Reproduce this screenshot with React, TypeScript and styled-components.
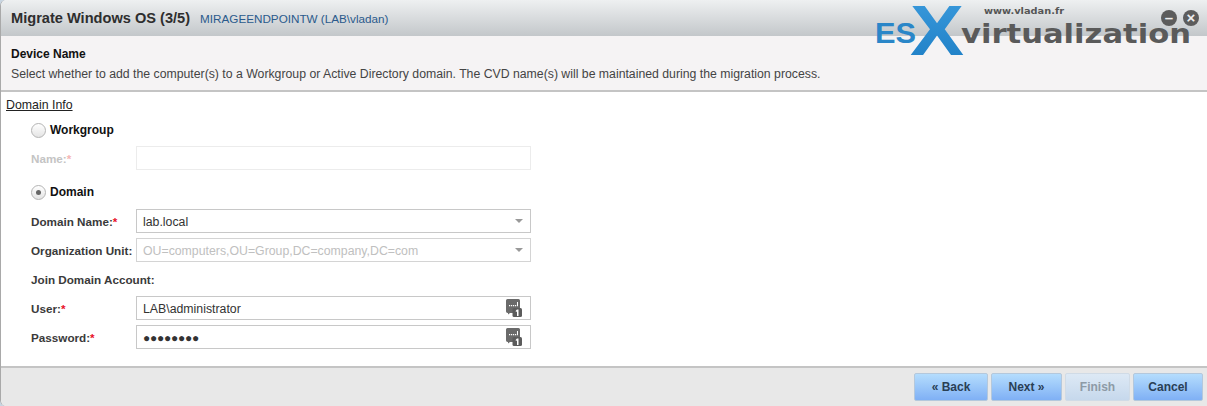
import React from "react";
import styled, {createGlobalStyle} from "styled-components";

const Global = createGlobalStyle`
  html, body {
    margin: 0;
    padding: 0;
    background: #c9d6e2;
  }
  body {
    font-family: "Liberation Sans", Arial, sans-serif;
    font-size: 12px;
    color: #333;
  }
`;

const Dialog = styled.div`
  position: relative;
  width: 1207px;
  height: 406px;
  box-sizing: border-box;
  border-left: 1px solid #a9a9a9;
  border-radius: 6px 0 0 6px;
  background: #fff;
  display: flex;
  flex-direction: column;
  overflow: hidden;
`;

const TitleBar = styled.div`
  height: 36px;
  box-sizing: border-box;
  padding-left: 10px;
  display: flex;
  align-items: center;
  gap: 10px;
  background: linear-gradient(#eef0f1, #c3c7ca);
`;

const Title = styled.div`
  font-size: 14.6px;
  font-weight: bold;
  color: #2e2e2e;
`;

const SubTitle = styled.div`
  font-size: 11.7px;
  color: #2a5a8c;
`;

const Intro = styled.div`
  height: 56px;
  box-sizing: border-box;
  padding: 11px 0 0 10px;
  background: #f5f3f4;
  border-bottom: 2px solid #c4c4c4;
`;

const IntroTitle = styled.div`
  font-size: 12px;
  font-weight: bold;
  color: #111;
  line-height: 15px;
`;

const IntroText = styled.div`
  margin-top: 5px;
  font-size: 12.28px;
  color: #444;
  line-height: 15px;
`;

const Content = styled.div`
  flex: 1;
  padding: 6px 0 0 5px;
`;

const SectionLink = styled.div`
  font-size: 12.35px;
  line-height: 14px;
  color: #222;
  text-decoration: underline;
`;

const Form = styled.div`
  padding: 10px 0 0 25px;
  display: flex;
  flex-direction: column;
`;

const RadioRow = styled.div<{ $top: number }>`
  margin-top: ${p => p.$top}px;
  height: 16px;
  display: flex;
  align-items: center;
  gap: 4px;
  font-size: 12px;
  font-weight: bold;
  color: #111;
`;

const Radio = styled.span<{ $checked?: boolean }>`
  width: 13px;
  height: 13px;
  border-radius: 50%;
  border: 1px solid #b4b4b4;
  background: linear-gradient(#fff, #e4e4e4);
  display: flex;
  align-items: center;
  justify-content: center;

  &::after {
    content: "";
    display: ${p => (p.$checked ? "block" : "none")};
    width: 5px;
    height: 5px;
    border-radius: 50%;
    background: #666;
  }
`;

const Row = styled.div<{ $top: number }>`
  margin-top: ${p => p.$top}px;
  display: flex;
  align-items: center;
  height: 24px;
`;

const Label = styled.div<{ $disabled?: boolean }>`
  width: 105px;
  flex: none;
  font-size: 11.7px;
  font-weight: bold;
  color: ${p => (p.$disabled ? "#c4c4c4" : "#3a3a3a")};
`;

const Star = styled.span<{ $disabled?: boolean }>`
  color: ${p => (p.$disabled ? "#f5b5b5" : "#e8102a")};
`;

const Field = styled.div<{ $state?: "faint" | "soft" }>`
  width: 395px;
  height: 24px;
  box-sizing: border-box;
  display: flex;
  align-items: center;
  justify-content: space-between;
  padding: 0 7px 0 6px;
  background: #fff;
  border: 1px solid ${p => (p.$state === "faint" ? "#ececec" : p.$state === "soft" ? "#d4d4d4" : "#c8c8c8")};
  font-size: 12.3px;
  color: ${p => (p.$state === "soft" ? "#c0c0c0" : "#333")};
`;

const FieldText = styled.span`
  padding-top: 2px;
`;

const Arrow = styled.span`
  width: 0;
  height: 0;
  border-left: 4px solid transparent;
  border-right: 4px solid transparent;
  border-top: 4px solid #999;
`;

const Dots = styled.span`
  padding-top: 2px;
  font-size: 12px;
  letter-spacing: -0.25px;
  color: #333;
`;

const Heading = styled.div`
  margin-top: 11px;
  height: 14px;
  line-height: 14px;
  font-size: 11.7px;
  font-weight: bold;
  color: #3a3a3a;
`;

const Footer = styled.div`
  height: 40px;
  box-sizing: border-box;
  border-top: 2px solid #c4c4c4;
  background: #e8e8e8;
  display: flex;
  justify-content: flex-end;
  gap: 3px;
  padding: 5px 4px 0 0;
`;

const Btn = styled.div<{ $w: number; $off?: boolean }>`
  width: ${p => p.$w}px;
  height: 28px;
  box-sizing: border-box;
  border: 1px solid ${p => (p.$off ? "#d0dbe6" : "#b4c8dc")};
  border-radius: 2px;
  display: flex;
  align-items: center;
  justify-content: center;
  font-size: 12px;
  font-weight: bold;
  color: ${p => (p.$off ? "#8d9aa6" : "#2a3f55")};
  background: ${p => (p.$off ? "linear-gradient(#dde9f5, #c6d8ec)" : "linear-gradient(#b5ddfd, #7fb0f5)")};
`;

const Logo = styled.div`
  position: absolute;
  left: 874px;
  top: 0;
  width: 333px;
  height: 60px;
`;

const WinBtn = styled.div<{ $x: number }>`
  position: absolute;
  left: ${p => p.$x}px;
  top: 10px;
  width: 16px;
  height: 16px;
  border-radius: 50%;
  background: #5c5c5c;
  color: #eee;
  font-size: 15px;
  line-height: 15px;
  font-weight: bold;
  text-align: center;
`;

const IconSvg = styled.svg`
  margin-right: 1px;
`;

function ChatIcon() {
    return (
        <IconSvg width="16" height="18" viewBox="0 0 16 18">
            <path d="M1.500 0h11A1.500 1.500 0 0 1 14 1.500V14H4l-2 1.500V14A2 2 0 0 1 0 12.500V1.500A1.500 1.500 0 0 1 1.500 0z" fill="#6a6a6a"/>
            <path d="M3 6h1.200v1.200H3zM5 6h1.200v1.200H5zM7 6h1.200v1.200H7zM9 6h1.200v1.200H9zM11 3h1v4.200h-1z" fill="#fff"/>
            <rect x="6.500" y="9" width="9.500" height="9" rx="1.500" fill="#5c5c5c"/>
            <path d="M11 10.500h1.500V17H11v-4.600l-1.200.6v-1.200z" fill="#fff"/>
        </IconSvg>
    );
}

function LogoArt() {
    return (
        <svg width="333" height="60" viewBox="0 0 333 60">
            <defs>
                <linearGradient id="xBlue" x1="0" y1="0" x2="0" y2="1">
                    <stop offset="0" stopColor="#3b9bdd"/>
                    <stop offset="1" stopColor="#1c7dc4"/>
                </linearGradient>
            </defs>
            <text x="0" y="43" fontFamily="'Liberation Sans', sans-serif" fontWeight="bold" fontSize="30"
                  fill="#2a86c8" textLength="41" lengthAdjust="spacingAndGlyphs">ES</text>
            <text x="35" y="55" fontFamily="'Liberation Sans', sans-serif" fontWeight="bold" fontSize="70"
                  fill="url(#xBlue)" textLength="54" lengthAdjust="spacingAndGlyphs">X</text>
            <text x="86" y="43" fontFamily="'DejaVu Sans', sans-serif" fontWeight="bold" fontSize="27"
                  fill="#5a5a5a" textLength="230" lengthAdjust="spacingAndGlyphs">virtualization</text>
            <text x="109" y="14" fontFamily="'DejaVu Sans', sans-serif" fontWeight="bold" fontSize="9"
                  fill="#555" textLength="80" lengthAdjust="spacingAndGlyphs">www.vladan.fr</text>
        </svg>
    );
}

export default function App() {
    return (
        <>
            <Global/>
            <Dialog>
                <TitleBar>
                    <Title>Migrate Windows OS (3/5)</Title>
                    <SubTitle>MIRAGEENDPOINTW (LAB\vladan)</SubTitle>
                </TitleBar>
                <Intro>
                    <IntroTitle>Device Name</IntroTitle>
                    <IntroText>Select whether to add the computer(s) to a Workgroup or Active Directory domain. The CVD name(s) will be maintained during the migration process.</IntroText>
                </Intro>
                <Content>
                    <SectionLink>Domain Info</SectionLink>
                    <Form>
                        <RadioRow $top={0}><Radio/>Workgroup</RadioRow>
                        <Row $top={8}>
                            <Label $disabled>Name:<Star $disabled>*</Star></Label>
                            <Field $state="faint"/>
                        </Row>
                        <RadioRow $top={14}><Radio $checked/>Domain</RadioRow>
                        <Row $top={9}>
                            <Label>Domain Name:<Star>*</Star></Label>
                            <Field><FieldText>lab.local</FieldText><Arrow/></Field>
                        </Row>
                        <Row $top={5}>
                            <Label>Organization Unit:</Label>
                            <Field $state="soft"><FieldText>OU=computers,OU=Group,DC=company,DC=com</FieldText><Arrow/></Field>
                        </Row>
                        <Heading>Join Domain Account:</Heading>
                        <Row $top={9}>
                            <Label>User:<Star>*</Star></Label>
                            <Field><FieldText>LAB\administrator</FieldText><ChatIcon/></Field>
                        </Row>
                        <Row $top={5}>
                            <Label>Password:<Star>*</Star></Label>
                            <Field><Dots>●●●●●●●●</Dots><ChatIcon/></Field>
                        </Row>
                    </Form>
                </Content>
                <Footer>
                    <Btn $w={74}>« Back</Btn>
                    <Btn $w={71}>Next »</Btn>
                    <Btn $w={65} $off>Finish</Btn>
                    <Btn $w={70}>Cancel</Btn>
                </Footer>
                <Logo><LogoArt/></Logo>
                <WinBtn $x={1160}>–</WinBtn>
                <WinBtn $x={1182}>×</WinBtn>
            </Dialog>
        </>
    );
}
